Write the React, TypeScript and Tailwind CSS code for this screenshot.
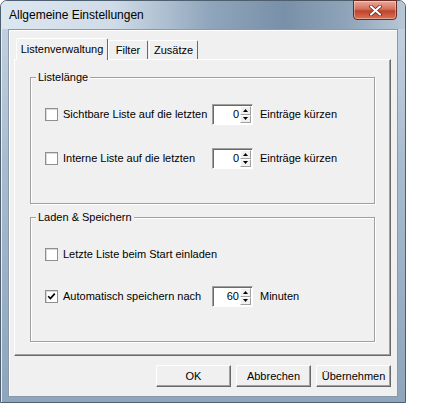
import React from 'react';

const ui = "font-['Liberation_Sans',Arial,sans-serif] text-[11px] text-black";

const Checkbox: React.FC<{ checked?: boolean }> = ({ checked }) => (
  <span className="flex h-[13px] w-[13px] shrink-0 items-center justify-center border border-[#8e8f8f] bg-white shadow-[inset_1px_1px_0_#d8d8d8]">
    {checked && (
      <svg width="9" height="9" viewBox="0 0 9 9">
        <path d="M1.2 4.2 L3.4 6.6 L7.8 1.6" fill="none" stroke="#000" strokeWidth="1.7" />
      </svg>
    )}
  </span>
);

const SpinArrow: React.FC<{ up?: boolean }> = ({ up }) => (
  <div className="flex h-1/2 w-full items-center justify-center border border-t-white border-l-white border-r-[#a0a0a0] border-b-[#a0a0a0] bg-[#f0f0f0]">
    <svg width="5" height="3" viewBox="0 0 5 3">
      <path d={up ? 'M2.5 0 L5 3 L0 3 Z' : 'M0 0 L5 0 L2.5 3 Z'} fill="#000" />
    </svg>
  </div>
);

const Spinner: React.FC<{ value: string }> = ({ value }) => (
  <div className="flex h-[21px] w-[41px] shrink-0 border border-t-[#a0a0a0] border-l-[#a0a0a0] border-r-white border-b-white shadow-[inset_1px_1px_0_#696969] bg-white p-[1px]">
    <div className="flex-1 pr-[1px] text-right leading-[17px]">{value}</div>
    <div className="flex w-[11px] flex-col">
      <SpinArrow up />
      <SpinArrow />
    </div>
  </div>
);

const Row: React.FC<{ label: string; checked?: boolean; value?: string; suffix?: string }> = ({ label, checked, value, suffix }) => (
  <div className="flex h-[21px] items-center">
    <div className="flex w-[167px] shrink-0 items-center gap-[5px] whitespace-nowrap">
      <Checkbox checked={checked} />
      <span>{label}</span>
    </div>
    {value !== undefined && (
      <>
        <Spinner value={value} />
        <span className="ml-[7px]">{suffix}</span>
      </>
    )}
  </div>
);

const GroupBox: React.FC<{ title: string; className?: string; children: React.ReactNode }> = ({ title, className, children }) => (
  <div className={`flex flex-col border border-[#a0a0a0] shadow-[inset_1px_1px_0_#fff,1px_1px_0_#fff] ${className ?? ''}`}>
    <div className="-mt-[8px] ml-[5px] h-[14px] self-start bg-[#f0f0f0] px-[2px] leading-[14px]">{title}</div>
    {children}
  </div>
);

const Button: React.FC<{ children: React.ReactNode }> = ({ children }) => (
  <div className="flex h-[22px] w-[75px] items-center justify-center border border-t-white border-l-white border-r-[#696969] border-b-[#696969] bg-[#f0f0f0] shadow-[inset_-1px_-1px_0_#a0a0a0]">
    {children}
  </div>
);

const App: React.FC = () => {
  return (
    <div className={`min-h-[415px] w-[438px] bg-white ${ui}`}>
      <div className="flex h-[403px] w-[406px] flex-col rounded-t-[7px] border border-[#4e5f70] bg-[linear-gradient(180deg,#c6d4e2_0%,#a9bccf_40%,#8ea5bb_100%)] px-[7px] pb-[5px] shadow-[inset_1px_1px_0_#e6eef6]">
        {/* title bar */}
        <div className="relative flex h-[28px] shrink-0 items-center -mx-[7px] px-[8px] pb-[1px] rounded-t-[6px] bg-[linear-gradient(90deg,#dde7f0_0%,#cfdbe7_28%,#8fa5bb_52%,#7890a8_70%,#8ea3b8_85%,#b7c7d6_100%)]">
          <span className="font-['Liberation_Sans',Arial,sans-serif] text-[12px] text-black">Allgemeine Einstellungen</span>
          <div className="absolute right-[8px] top-[-1px] flex h-[20px] w-[44px] items-center justify-center rounded-b-[4px] border border-[#6b2a22] bg-[linear-gradient(180deg,#e9a99a_0%,#d3715c_45%,#c0432a_55%,#d8735a_100%)] shadow-[inset_0_0_0_1px_rgba(255,255,255,0.35)]">
            <svg width="13" height="11" viewBox="0 0 13 11">
              <path d="M2 1.5 L11 9.5 M11 1.5 L2 9.5" stroke="#5a2018" strokeWidth="3.6" strokeLinecap="round" />
              <path d="M2 1.5 L11 9.5 M11 1.5 L2 9.5" stroke="#fff" strokeWidth="2.2" strokeLinecap="round" />
            </svg>
          </div>
        </div>

        {/* client area */}
        <div className="flex flex-1 flex-col border border-[#8799ab] bg-[#f0f0f0] pl-[5px] pr-[6px] pt-[7px] shadow-[inset_1px_1px_0_#fff]">
          <div className="flex h-[22px] items-end pl-[2px]">
            <div className="relative z-10 -mb-[1px] flex h-[22px] w-[92px] items-center justify-center rounded-t-[2px] border border-b-0 border-t-white border-l-white border-r-[#696969] bg-[#f0f0f0] pb-[1px]">
              Listenverwaltung
            </div>
            <div className="flex h-[19px] w-[40px] items-center justify-center rounded-t-[2px] border border-b-0 border-t-white border-l-white border-r-[#696969] bg-[#f0f0f0]">
              Filter
            </div>
            <div className="ml-[1px] flex h-[19px] w-[49px] items-center justify-center rounded-t-[2px] border border-b-0 border-t-white border-l-white border-r-[#696969] bg-[#f0f0f0]">
              Zusätze
            </div>
          </div>
          <div className="flex h-[297px] flex-col border border-t-white border-l-white border-r-[#696969] border-b-[#696969] shadow-[inset_-1px_-1px_0_#a0a0a0] px-[15px] pt-[17px]">
            <GroupBox title="Listelänge" className="h-[127px]">
              <div className="mt-[20px] flex flex-col gap-[23px] pl-[14px]">
                <Row label="Sichtbare Liste auf die letzten" value="0" suffix="Einträge kürzen" />
                <Row label="Interne Liste auf die letzten" value="0" suffix="Einträge kürzen" />
              </div>
            </GroupBox>
            <GroupBox title="Laden & Speichern" className="mt-[13px] h-[125px]">
              <div className="mt-[20px] flex flex-col gap-[21px] pl-[14px]">
                <Row label="Letzte Liste beim Start einladen" />
                <Row label="Automatisch speichern nach" checked value="60" suffix="Minuten" />
              </div>
            </GroupBox>
          </div>
          <div className="mt-[9px] flex justify-end gap-[5px]">
            <Button>OK</Button>
            <Button>Abbrechen</Button>
            <Button>Übernehmen</Button>
          </div>
        </div>
      </div>
    </div>
  );
};

export default App;
